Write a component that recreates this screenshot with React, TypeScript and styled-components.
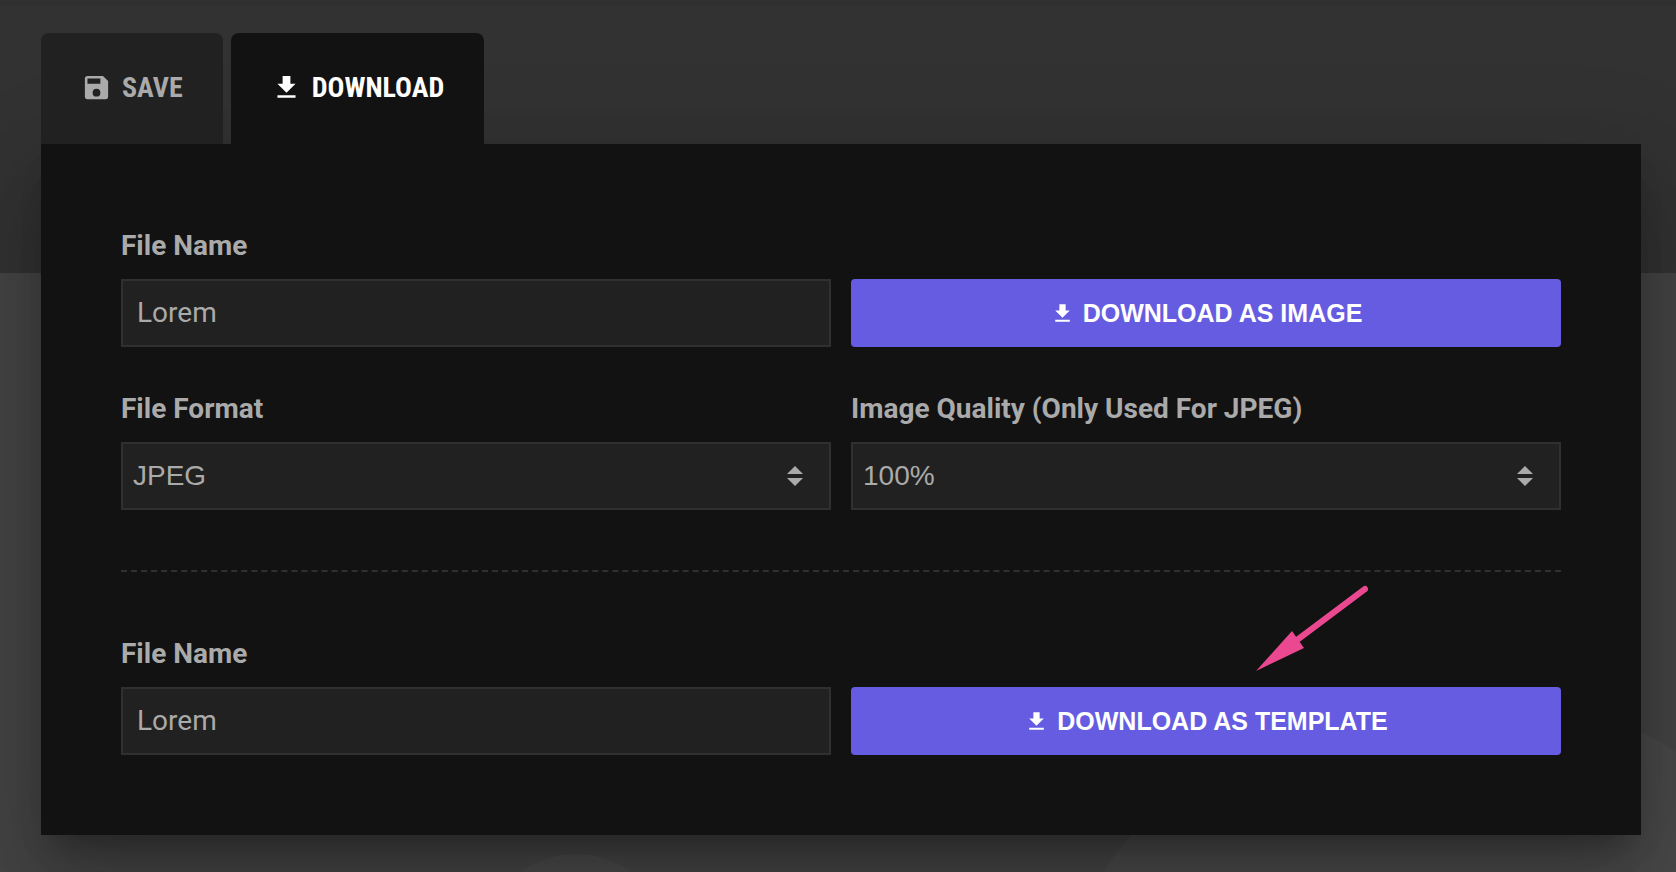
import { useId, useState, type ReactNode } from "react";
import styled, { createGlobalStyle } from "styled-components";

const GlobalStyle = createGlobalStyle`
  *, *::before, *::after { box-sizing: border-box; }
  body { margin: 0; background: #424242; font-family: Roboto, "Liberation Sans", sans-serif; }
`;

const Page = styled.main`
  position: relative;
  overflow: hidden;
  min-height: 100vh;
  padding: 33px 35px 37px 41px;
  background: linear-gradient(#303030 6px, #323232 6px, #323232 273px, #444445 273px);
`;

const Bubble = styled.span<{ $size: number }>`
  position: absolute;
  width: ${(p) => p.$size}px;
  height: ${(p) => p.$size}px;
  border-radius: 50%;
  background: #494949;
`;

const LargeBubble = styled(Bubble)`
  right: -189px;
  top: 685px;
`;

const SmallBubble = styled(Bubble)`
  left: 483px;
  top: 854px;
`;

const Tabs = styled.div`
  position: relative;
  z-index: 1;
  display: flex;
  gap: 8px;
`;

const Tab = styled.button<{ $active?: boolean }>`
  display: flex;
  align-items: center;
  gap: 10px;
  height: 111px;
  padding: 0 40px 2px;
  border: 0;
  border-radius: 8px 8px 0 0;
  background: ${(p) => (p.$active ? "#121212" : "#212121")};
  color: ${(p) => (p.$active ? "#fff" : "#aaa")};
  font: 700 28px/32px "Roboto Condensed", "Liberation Sans Narrow", Roboto, sans-serif;
  text-transform: uppercase;
  cursor: pointer;
`;

const Panel = styled.section`
  position: relative;
  padding: 80px;
  background: #121212;
  box-shadow:
    0 22px 30px -14px rgba(0, 0, 0, 0.3),
    0 48px 76px 6px rgba(0, 0, 0, 0.18),
    0 18px 92px 12px rgba(0, 0, 0, 0.1);
`;

const FormGrid = styled.form`
  display: grid;
  grid-template-columns: 1fr 1fr;
  column-gap: 20px;
  row-gap: 40px;
  align-items: end;
`;

const Field = styled.div`
  display: flex;
  flex-direction: column;
  gap: 16px;
`;

const Label = styled.label`
  padding-top: 4px;
  color: #aaa;
  font-size: 28px;
  font-weight: 700;
  line-height: 35px;
`;

const TextInput = styled.input`
  width: 100%;
  height: 68px;
  padding: 0 14px 2px;
  border: 2px solid #303030;
  border-radius: 0;
  background: #212121;
  color: #aaa;
  font: 400 28px/32px Roboto, sans-serif;
`;

const SelectBox = styled.div`
  position: relative;
  height: 68px;
`;

const Select = styled.select`
  appearance: none;
  width: 100%;
  height: 100%;
  padding: 0 60px 0 10px;
  border: 2px solid #303030;
  border-radius: 0;
  background: #212121;
  color: #aaa;
  font: 400 28px/32px "Liberation Sans", Arial, sans-serif;
`;

const Sorter = styled.svg`
  position: absolute;
  right: 28px;
  top: 24px;
  pointer-events: none;
`;

const ActionCell = styled.div`
  position: relative;
`;

const ActionButton = styled.button`
  display: flex;
  align-items: center;
  justify-content: center;
  gap: 8px;
  width: 100%;
  height: 68px;
  padding: 0;
  border: 0;
  border-radius: 4px;
  background: #655ce1;
  color: #fff;
  font: 700 25px/32px "Liberation Sans", Arial, sans-serif;
  text-transform: uppercase;
  cursor: pointer;
`;

const Divider = styled.hr`
  margin: 60px 0;
  border: 0;
  border-top: 2px dashed #303030;
`;

const Pointer = styled.svg`
  position: absolute;
  left: 404px;
  bottom: 84px;
  pointer-events: none;
`;

function DownloadIcon({ size }: { size: number }) {
  return (
    <svg width={size} height={size} viewBox="0 0 24 24" fill="currentColor" aria-hidden="true">
      <path d="M5 20h14v-2H5v2zM19 9h-4V3H9v6H5l7 7 7-7z" />
    </svg>
  );
}

function SaveIcon({ size }: { size: number }) {
  return (
    <svg width={size} height={size} viewBox="0 0 24 24" fill="currentColor" aria-hidden="true">
      <path d="M15 9H5V5h10m-3 14a3 3 0 0 1-3-3 3 3 0 0 1 3-3 3 3 0 0 1 3 3 3 3 0 0 1-3 3m5-16H5c-1.11 0-2 .9-2 2v14a2 2 0 0 0 2 2h14a2 2 0 0 0 2-2V7l-4-4z" />
    </svg>
  );
}

function NameField() {
  const id = useId();
  const [name, setName] = useState("Lorem");
  return (
    <Field>
      <Label htmlFor={id}>File Name</Label>
      <TextInput id={id} value={name} onChange={(e) => setName(e.target.value)} />
    </Field>
  );
}

function SelectField({ label, options }: { label: string; options: string[] }) {
  const id = useId();
  return (
    <Field>
      <Label htmlFor={id}>{label}</Label>
      <SelectBox>
        <Select id={id}>
          {options.map((o) => (
            <option key={o}>{o}</option>
          ))}
        </Select>
        <Sorter width="16" height="20" viewBox="0 0 16 20" fill="#aaa" aria-hidden="true">
          <path d="M0 8 8 0l8 8zM0 12h16l-8 8z" />
        </Sorter>
      </SelectBox>
    </Field>
  );
}

function Action({ label, children }: { label: string; children?: ReactNode }) {
  return (
    <ActionCell>
      <ActionButton type="button">
        <DownloadIcon size={25} />
        {label}
      </ActionButton>
      {children}
    </ActionCell>
  );
}

export default function App() {
  return (
    <Page>
      <GlobalStyle />
      <LargeBubble $size={830} />
      <SmallBubble $size={186} />
      <Tabs role="tablist">
        <Tab role="tab" aria-selected={false}>
          <SaveIcon size={31} />
          Save
        </Tab>
        <Tab role="tab" aria-selected $active>
          <DownloadIcon size={31} />
          Download
        </Tab>
      </Tabs>
      <Panel role="tabpanel">
        <FormGrid>
          <NameField />
          <Action label="Download as image" />
          <SelectField label="File Format" options={["JPEG", "PNG"]} />
          <SelectField label="Image Quality (Only Used For JPEG)" options={["100%", "90%", "80%"]} />
        </FormGrid>
        <Divider />
        <FormGrid>
          <NameField />
          <Action label="Download as template">
            <Pointer width="115" height="88" viewBox="0 0 115 88" aria-hidden="true">
              <path d="M110 6 42 57" stroke="#ea4891" strokeWidth="6" strokeLinecap="round" />
              <path d="M1 88 37 48l12 17z" fill="#ea4891" />
            </Pointer>
          </Action>
        </FormGrid>
      </Panel>
    </Page>
  );
}
